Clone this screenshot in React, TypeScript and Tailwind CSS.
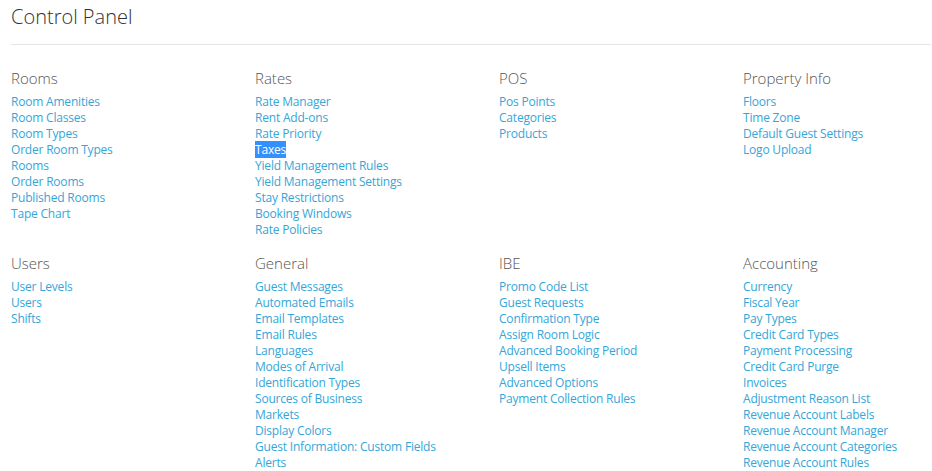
const sections: { title: string; links: string[] }[][] = [
  [
    {
      title: 'Rooms',
      links: ['Room Amenities', 'Room Classes', 'Room Types', 'Order Room Types', 'Rooms', 'Order Rooms', 'Published Rooms', 'Tape Chart'],
    },
    {
      title: 'Rates',
      links: [
        'Rate Manager',
        'Rent Add-ons',
        'Rate Priority',
        'Taxes',
        'Yield Management Rules',
        'Yield Management Settings',
        'Stay Restrictions',
        'Booking Windows',
        'Rate Policies',
      ],
    },
    { title: 'POS', links: ['Pos Points', 'Categories', 'Products'] },
    { title: 'Property Info', links: ['Floors', 'Time Zone', 'Default Guest Settings', 'Logo Upload'] },
  ],
  [
    { title: 'Users', links: ['User Levels', 'Users', 'Shifts'] },
    {
      title: 'General',
      links: [
        'Guest Messages',
        'Automated Emails',
        'Email Templates',
        'Email Rules',
        'Languages',
        'Modes of Arrival',
        'Identification Types',
        'Sources of Business',
        'Markets',
        'Display Colors',
        'Guest Information: Custom Fields',
        'Alerts',
      ],
    },
    {
      title: 'IBE',
      links: [
        'Promo Code List',
        'Guest Requests',
        'Confirmation Type',
        'Assign Room Logic',
        'Advanced Booking Period',
        'Upsell Items',
        'Advanced Options',
        'Payment Collection Rules',
      ],
    },
    {
      title: 'Accounting',
      links: [
        'Currency',
        'Fiscal Year',
        'Pay Types',
        'Credit Card Types',
        'Payment Processing',
        'Credit Card Purge',
        'Invoices',
        'Adjustment Reason List',
        'Revenue Account Labels',
        'Revenue Account Manager',
        'Revenue Account Categories',
        'Revenue Account Rules',
      ],
    },
  ],
];

const Section = ({ title, links }: { title: string; links: string[] }) => {
  return (
    <div className="flex flex-col">
      <h3 className="text-[15px] leading-[20px] font-light text-[#555]">{title}</h3>
      <ul className="mt-[6px] flex flex-col">
        {links.map((link) => (
          <li key={link} className="text-[12px] leading-[16px] tracking-[-0.2px]">
            <a
              href="#"
              className={
                link === 'Taxes'
                  ? 'bg-[#3390ff] text-white'
                  : 'text-[#34a6d8]'
              }
            >
              {link}
            </a>
          </li>
        ))}
      </ul>
    </div>
  );
};

export default function App() {
  return (
    <div className="min-h-[471px] bg-white px-[11px] font-['Open_Sans',sans-serif] overflow-hidden">
      <h1 className="pt-[3px] text-[20px] leading-[28px] font-light text-[#333]">Control Panel</h1>
      <hr className="mt-[13px] mr-[-10px] border-t border-[#e5e5e5]" />
      <div className="mt-[23px] flex flex-col gap-[15px]">
        {sections.map((row, i) => (
          <div key={i} className="grid grid-cols-[244px_244px_244px_1fr]">
            {row.map((s) => (
              <Section key={s.title} title={s.title} links={s.links} />
            ))}
          </div>
        ))}
      </div>
    </div>
  );
}
